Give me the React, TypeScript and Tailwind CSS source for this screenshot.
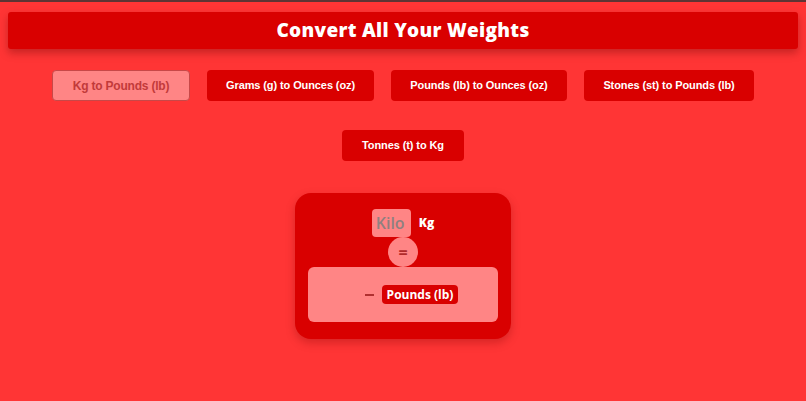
import { useState } from "react";

const conversions = [
  { id: "kg-lb", label: "Kg to Pounds (lb)", from: "Kg", to: "Pounds (lb)", w: "w-[138px]" },
  { id: "g-oz", label: "Grams (g) to Ounces (oz)", from: "g", to: "Ounces (oz)", w: "w-[167px]" },
  { id: "lb-oz", label: "Pounds (lb) to Ounces (oz)", from: "lb", to: "Ounces (oz)", w: "w-[176px]" },
  { id: "st-lb", label: "Stones (st) to Pounds (lb)", from: "st", to: "Pounds (lb)", w: "w-[170px]" },
  { id: "t-kg", label: "Tonnes (t) to Kg", from: "t", to: "Kg", w: "w-[122px]" },
];

export default function App() {
  const [active, setActive] = useState("kg-lb");
  const [value, setValue] = useState("");
  const current = conversions.find((c) => c.id === active)!;

  const renderButton = (c: (typeof conversions)[number]) => (
    <button
      key={c.id}
      onClick={() => setActive(c.id)}
      className={
        c.id === active
          ? `${c.w} h-[31px] rounded-[4px] border border-[#c84848] bg-[#ff8585] text-[#c23a3a] text-[12px] tracking-[-0.2px] font-bold`
          : `${c.w} h-[31px] rounded-[4px] bg-[#d90000] text-white text-[11px] tracking-[-0.1px] font-bold`
      }
    >
      {c.label}
    </button>
  );

  return (
    <div className="min-h-[401px] bg-[#ff3535] border-t-2 border-[#5e3434] pt-[10px] font-['Liberation_Sans',Arial,sans-serif]">
      <header className="mx-2 h-[37px] rounded-[3px] bg-[#d90000] shadow-[0_4px_8px_rgba(90,0,0,0.35)] flex items-center justify-center">
        <h1 className="text-white text-[19px] font-extrabold tracking-[0.3px] font-['Open_Sans',sans-serif]">
          Convert All Your Weights
        </h1>
      </header>

      <nav className="mt-[21px] flex flex-col items-center gap-[29px]">
        <div className="flex gap-[17px]">{conversions.slice(0, 4).map(renderButton)}</div>
        <div className="flex">{conversions.slice(4).map(renderButton)}</div>
      </nav>

      <div className="mt-[32px] flex justify-center">
        <div className="w-[216px] rounded-[16px] bg-[#d90000] px-[13px] pt-[16px] pb-[17px] shadow-[0_4px_10px_rgba(120,0,0,0.3)] flex flex-col items-center">
          <div className="flex items-center gap-[8px]">
            <input
              value={value}
              onChange={(e) => setValue(e.target.value)}
              placeholder="Kilo"
              className="w-[39px] h-[28px] rounded-[4px] bg-[#ff8585] px-[4px] text-[16px] font-semibold text-[#6b2a2a] placeholder:text-[#8f8080] outline-none font-['Open_Sans',sans-serif]"
            />
            <span className="text-white text-[12px] font-extrabold font-['Open_Sans',sans-serif]">
              {current.from}
            </span>
          </div>
          <div className="w-[30px] h-[30px] rounded-full bg-[#ff8585] flex items-center justify-center text-[#b02a2a] text-[16px] font-bold font-['Open_Sans',sans-serif] leading-none">
            =
          </div>
          <div className="w-[190px] h-[55px] rounded-[6px] bg-[#ff8585] flex items-center justify-center gap-[8px] pl-[17px]">
            <span className="w-[9px] h-[2px] bg-[#b03030]" />
            <span className="h-[19px] px-[5px] rounded-[4px] bg-[#d90000] text-white text-[12px] font-bold flex items-center font-['Open_Sans',sans-serif]">
              {current.to}
            </span>
          </div>
        </div>
      </div>
    </div>
  );
}
